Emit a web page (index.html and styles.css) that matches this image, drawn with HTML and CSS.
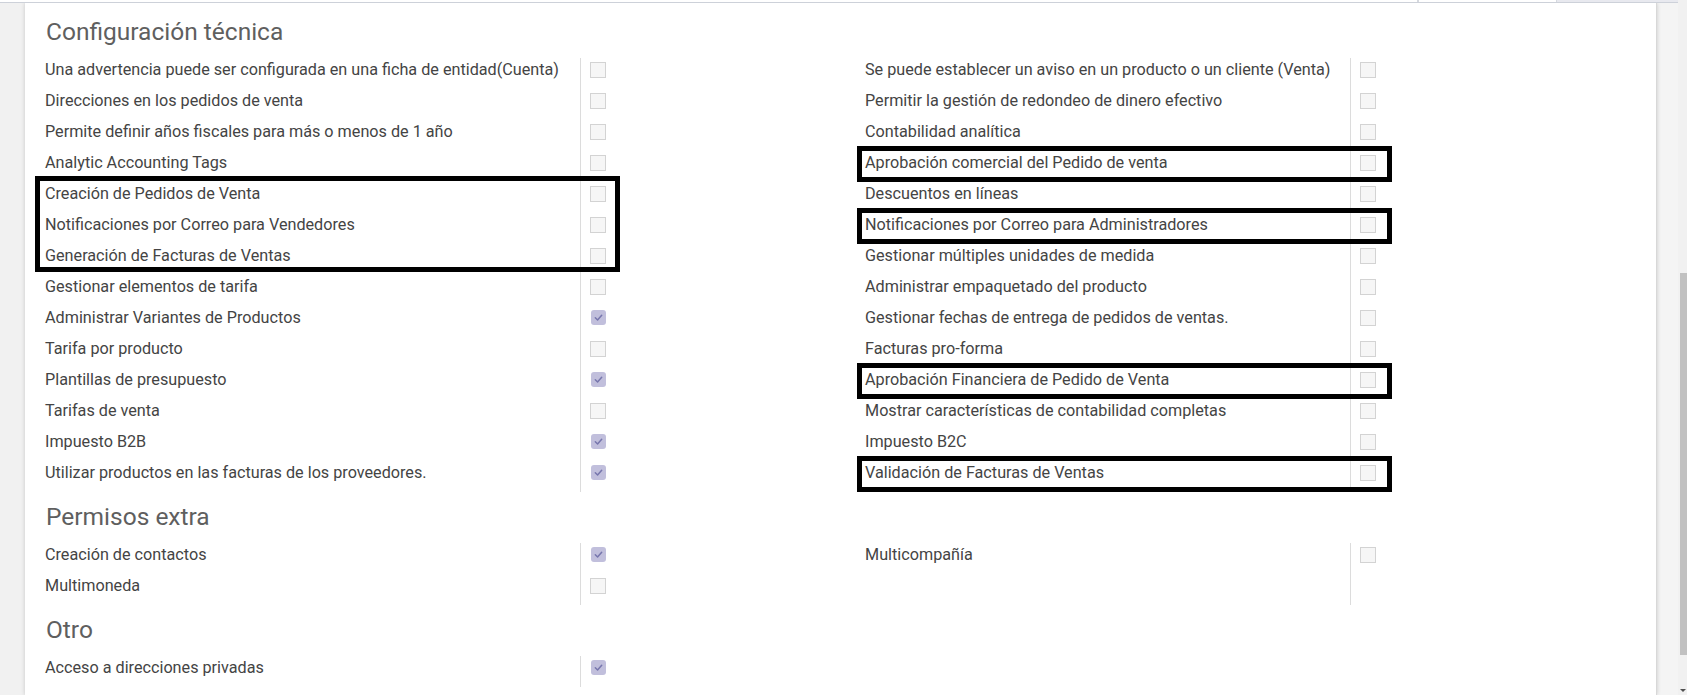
FILE: index.html
```html
<!DOCTYPE html>
<html lang="es">
<head>
<meta charset="utf-8">
<title>Configuración técnica</title>
<link rel="stylesheet" href="styles.css">
</head>
<body>
<div class="app">
  <div class="main">
    <div class="topbar">
      <div class="tb-fill"></div>
      <div class="tb-sep"></div>
      <div class="tb-seg"></div>
      <div class="tb-grey"></div>
    </div>
    <div class="content">
      <div class="sheet">
        <h2 class="sep-title first">Configuración técnica</h2>
        <div class="group">
          <div class="col col-left">
            <div class="lbl">Una advertencia puede ser configurada en una ficha de entidad(Cuenta)</div><div class="fld"><span class="cb"></span></div>
            <div class="lbl">Direcciones en los pedidos de venta</div><div class="fld"><span class="cb"></span></div>
            <div class="lbl">Permite definir años fiscales para más o menos de 1 año</div><div class="fld"><span class="cb"></span></div>
            <div class="lbl">Analytic Accounting Tags</div><div class="fld"><span class="cb"></span></div>
            <div class="lbl">Creación de Pedidos de Venta</div><div class="fld"><span class="cb"></span></div>
            <div class="lbl">Notificaciones por Correo para Vendedores</div><div class="fld"><span class="cb"></span></div>
            <div class="lbl">Generación de Facturas de Ventas</div><div class="fld"><span class="cb"></span></div>
            <div class="lbl">Gestionar elementos de tarifa</div><div class="fld"><span class="cb"></span></div>
            <div class="lbl">Administrar Variantes de Productos</div><div class="fld"><span class="cb on"><svg viewBox="0 0 16 16"><path d="M4.6 8.3 L7 10.6 L11.4 5.6"/></svg></span></div>
            <div class="lbl">Tarifa por producto</div><div class="fld"><span class="cb"></span></div>
            <div class="lbl">Plantillas de presupuesto</div><div class="fld"><span class="cb on"><svg viewBox="0 0 16 16"><path d="M4.6 8.3 L7 10.6 L11.4 5.6"/></svg></span></div>
            <div class="lbl">Tarifas de venta</div><div class="fld"><span class="cb"></span></div>
            <div class="lbl">Impuesto B2B</div><div class="fld"><span class="cb on"><svg viewBox="0 0 16 16"><path d="M4.6 8.3 L7 10.6 L11.4 5.6"/></svg></span></div>
            <div class="lbl">Utilizar productos en las facturas de los proveedores.</div><div class="fld"><span class="cb on"><svg viewBox="0 0 16 16"><path d="M4.6 8.3 L7 10.6 L11.4 5.6"/></svg></span></div>
          </div>
          <div class="col col-right">
            <div class="lbl">Se puede establecer un aviso en un producto o un cliente (Venta)</div><div class="fld"><span class="cb"></span></div>
            <div class="lbl">Permitir la gestión de redondeo de dinero efectivo</div><div class="fld"><span class="cb"></span></div>
            <div class="lbl">Contabilidad analítica</div><div class="fld"><span class="cb"></span></div>
            <div class="lbl">Aprobación comercial del Pedido de venta</div><div class="fld"><span class="cb"></span></div>
            <div class="lbl">Descuentos en líneas</div><div class="fld"><span class="cb"></span></div>
            <div class="lbl">Notificaciones por Correo para Administradores</div><div class="fld"><span class="cb"></span></div>
            <div class="lbl">Gestionar múltiples unidades de medida</div><div class="fld"><span class="cb"></span></div>
            <div class="lbl">Administrar empaquetado del producto</div><div class="fld"><span class="cb"></span></div>
            <div class="lbl">Gestionar fechas de entrega de pedidos de ventas.</div><div class="fld"><span class="cb"></span></div>
            <div class="lbl">Facturas pro-forma</div><div class="fld"><span class="cb"></span></div>
            <div class="lbl">Aprobación Financiera de Pedido de Venta</div><div class="fld"><span class="cb"></span></div>
            <div class="lbl">Mostrar características de contabilidad completas</div><div class="fld"><span class="cb"></span></div>
            <div class="lbl">Impuesto B2C</div><div class="fld"><span class="cb"></span></div>
            <div class="lbl">Validación de Facturas de Ventas</div><div class="fld"><span class="cb"></span></div>
          </div>
        </div>

        <h2 class="sep-title">Permisos extra</h2>
        <div class="group">
          <div class="col col-left">
            <div class="lbl">Creación de contactos</div><div class="fld"><span class="cb on"><svg viewBox="0 0 16 16"><path d="M4.6 8.3 L7 10.6 L11.4 5.6"/></svg></span></div>
            <div class="lbl">Multimoneda</div><div class="fld"><span class="cb"></span></div>
          </div>
          <div class="col col-right">
            <div class="lbl">Multicompañía</div><div class="fld"><span class="cb"></span></div>
            <div class="lbl"></div><div class="fld"></div>
          </div>
        </div>

        <h2 class="sep-title">Otro</h2>
        <div class="group">
          <div class="col col-left">
            <div class="lbl">Acceso a direcciones privadas</div><div class="fld"><span class="cb on"><svg viewBox="0 0 16 16"><path d="M4.6 8.3 L7 10.6 L11.4 5.6"/></svg></span></div>
          </div>
          <div class="col col-right"></div>
        </div>

        <div class="mark mark-left"></div>
        <div class="mark mark-r1"></div>
        <div class="mark mark-r2"></div>
        <div class="mark mark-r3"></div>
        <div class="mark mark-r4"></div>
      </div>
      <div class="right-gutter"></div>
    </div>
  </div>
  <div class="scrollbar">
    <div class="thumb"></div>
    <div class="arrow"></div>
  </div>
</div>
</body>
</html>
```

FILE: styles.css
```css
* { box-sizing: border-box; }
html, body { margin: 0; padding: 0; }
body {
  font-family: Roboto, "Noto Sans", "Liberation Sans", sans-serif;
  color: #444444;
  background: #fff;
  overflow: hidden;
}
.app {
  display: flex;
  width: 1687px;
  height: 695px;
}
.main {
  width: 1678px;
  display: flex;
  flex-direction: column;
}
.topbar {
  height: 3px;
  display: flex;
  border-bottom: 1px solid #cdd1d9;
}
.tb-fill { width: 1417px; background: #fff; }
.tb-sep { width: 2px; border-left: 1px solid #d6d9df; border-right: 1px solid #d6d9df; }
.tb-seg { width: 138px; background: #fff; border-right: 1px solid #d6d9df; }
.tb-grey { flex: 1; background: #e8e9ef; }

.content {
  flex: 1;
  display: flex;
  background: #f1f1f1;
  padding-left: 25px;
  overflow: hidden;
}
.sheet {
  position: relative;
  width: 1632px;
  background: #fff;
  box-shadow: 0 0 4px rgba(0,0,0,0.18);
  border-right: 1px solid #d8d8d8;
  padding-left: 20px;
}
.right-gutter {
  flex: 1;
  background: #f4f4f4;
}

.sep-title {
  margin: 0 0 12px 0;
  padding-top: 10px;
  padding-left: 1px;
  font-size: 24.5px;
  line-height: 29px;
  font-weight: 400;
  color: #5f5f5f;
}
.sep-title.first { padding-top: 14px; }

.group {
  display: grid;
  grid-template-columns: 820px 1fr;
}
.col {
  display: grid;
  grid-auto-rows: 31px;
  align-content: start;
}
.col-left { grid-template-columns: 536px 1fr; }
.col-right { grid-template-columns: 486px 1fr; }
.lbl {
  border-right: 1px solid #dcdcdc;
  font-size: 16.2px;
  line-height: 24px;
  white-space: nowrap;
}
.fld {
  padding-left: 9px;
  padding-top: 4px;
}
.cb {
  display: block;
  width: 16px;
  height: 16px;
  background: #f6f6f6;
  border: 1px solid #d3d3d3;
}
.cb.on {
  width: 15px;
  height: 15px;
  margin-left: 1px;
  background: #c1bfdc;
  border: none;
  border-radius: 3px;
}
.cb svg {
  display: block;
  width: 15px;
  height: 15px;
}
.cb svg path {
  fill: none;
  stroke: #7776ad;
  stroke-width: 1.6;
  stroke-linecap: round;
  stroke-linejoin: round;
}

.mark {
  position: absolute;
  border: 5px solid #000;
}
.mark-left { left: 10px; top: 173px; width: 585px; height: 96px; }
.mark-r1 { left: 832px; top: 143px; width: 535px; height: 36px; }
.mark-r2 { left: 832px; top: 205px; width: 535px; height: 36px; }
.mark-r3 { left: 832px; top: 360px; width: 535px; height: 36px; }
.mark-r4 { left: 832px; top: 453px; width: 535px; height: 36px; }

.scrollbar {
  position: relative;
  width: 9px;
  background: #f1f1f1;
}
.thumb {
  position: absolute;
  left: 2px;
  right: 0;
  top: 273px;
  height: 382px;
  background: #c1c1c1;
}
.arrow {
  position: absolute;
  right: 1px;
  bottom: 3px;
  width: 0;
  height: 0;
  border-left: 3px solid transparent;
  border-right: 3px solid transparent;
  border-top: 3px solid #505050;
}
```
